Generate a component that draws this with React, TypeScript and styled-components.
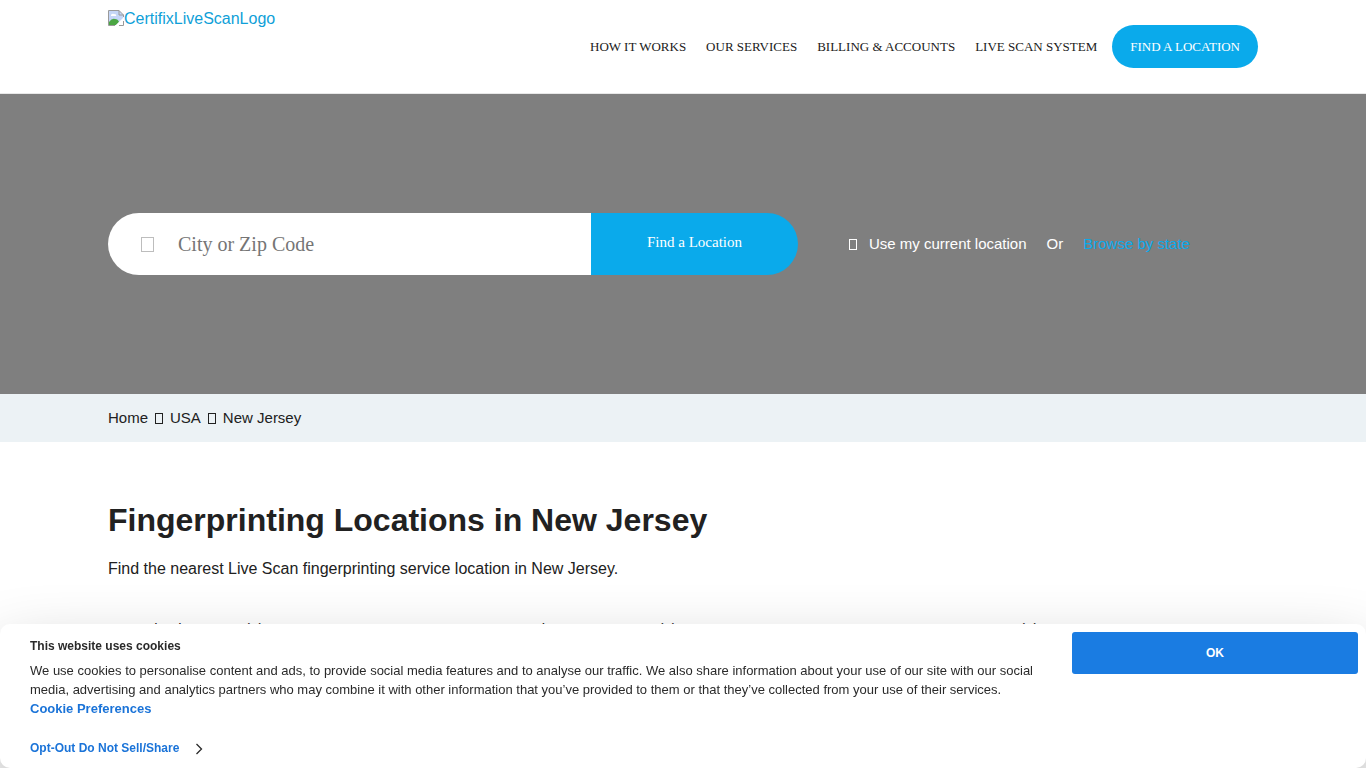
import React from "react";
import styled, { createGlobalStyle } from "styled-components";

const sans = `"Liberation Sans", Arial, sans-serif`;
const serif = `"Liberation Serif", "Times New Roman", serif`;

const GlobalStyle = createGlobalStyle`
  *, *::before, *::after { box-sizing: border-box; }
  html, body { margin: 0; height: 100%; overflow: hidden; }
  body { background: #fff; color: #212121; font: 16px/24px ${sans}; }
  a { color: inherit; text-decoration: none; }
  button, input { font: inherit; margin: 0; border: 0; padding: 0; }
  button { cursor: pointer; }
`;

const Container = styled.div`
  width: 100%;
  max-width: 1182px;
  margin: 0 auto;
  padding: 0 16px;
`;

const Header = styled.header`
  border-bottom: 1px solid #e8e8e8;
`;

const HeaderRow = styled(Container)`
  display: flex;
  justify-content: space-between;
  align-items: flex-start;
  min-height: 93px;
`;

const LogoLink = styled.a`
  display: flex;
  padding-top: 7px;
  color: #0f9fd8;

  svg { margin-top: 3px; flex: none; }
`;

const Nav = styled.nav`
  display: flex;
  align-items: center;
  gap: 20px;
  padding-top: 25px;
  font: 13px/20px ${serif};
  text-transform: uppercase;
  white-space: nowrap;
`;

const PillLink = styled.a`
  margin-left: -5px;
  padding: 12px 18px 11px;
  border-radius: 22px;
  background: #0aaaeb;
  color: #fff;
`;

const Hero = styled.section`
  background: #7f7f7f;
  color: #fff;
  padding: 119px 0;
`;

const HeroRow = styled(Container)`
  display: flex;
  align-items: center;
  gap: 51px;
`;

const SearchForm = styled.form`
  display: flex;
  flex: 0 1 690px;
  height: 62px;
`;

const SearchField = styled.label`
  display: flex;
  flex: 1;
  align-items: center;
  gap: 24px;
  padding-left: 33px;
  border-radius: 31px 0 0 31px;
  background: #fff;
  color: #bdbdbd;
`;

const SearchInput = styled.input`
  flex: 1;
  min-width: 0;
  background: transparent;
  color: #555;
  font: 20px/24px ${serif};
  outline: none;

  &::placeholder { color: #757575; opacity: 1; }
`;

const SearchButton = styled.button`
  width: 207px;
  padding-bottom: 4px;
  border-radius: 0 31px 31px 0;
  background: #0aaaeb;
  color: #fff;
  font: 15px/20px ${serif};
`;

const Glyph = styled.span<{ $large?: boolean }>`
  display: inline-block;
  flex: none;
  width: ${(p) => (p.$large ? 13 : 8)}px;
  height: ${(p) => (p.$large ? 15 : 11)}px;
  border: 1px solid currentColor;
`;

const HeroLinks = styled.div`
  display: flex;
  align-items: center;
  gap: 20px;
  font-size: 15px;
  line-height: 20px;
  white-space: nowrap;
`;

const LocateButton = styled.button`
  display: flex;
  align-items: center;
  gap: 12px;
  background: none;
  color: #fff;
`;

const StateLink = styled.a`
  color: #0aaaeb;
`;

const BreadcrumbBar = styled.nav`
  background: #ecf2f5;
`;

const Breadcrumbs = styled(Container)`
  display: flex;
  align-items: center;
  gap: 7px;
  padding-top: 14px;
  padding-bottom: 14px;
  font-size: 15px;
  line-height: 20px;
`;

const Main = styled.main`
  padding-top: 58px;
`;

const Title = styled.h1`
  margin: 0 0 17px;
  font-size: 32px;
  line-height: 40px;
`;

const Lead = styled.p`
  margin: 0;
`;

const Counties = styled.ul`
  display: grid;
  grid-template-columns: repeat(3, 1fr);
  column-gap: 20px;
  margin: 38px 0 0;
  padding: 0;
  list-style: none;
  font-size: 15px;
  line-height: 20px;
`;

const County = styled.li`
  padding-left: 32px;
`;

const CookieBanner = styled.aside`
  position: fixed;
  left: 0;
  right: 0;
  bottom: 0;
  display: flex;
  align-items: flex-start;
  justify-content: space-between;
  gap: 24px;
  padding: 8px 8px 10px 30px;
  border-radius: 10px;
  background: #fff;
  box-shadow: 0 32px 68px rgba(0, 0, 0, 0.3);
  color: #2a2a2a;
  font-size: 12px;
  line-height: 19px;
`;

const CookieText = styled.div`
  flex: 1;
  padding-top: 5px;
`;

const CookieTitle = styled.h2`
  margin: 0 0 5px;
  font-size: 12px;
  line-height: 19px;
`;

const CookieCopy = styled.p`
  margin: 0;
  font-size: 13px;
`;

const CookieLink = styled.a<{ $large?: boolean }>`
  display: flex;
  align-items: center;
  gap: 16px;
  width: fit-content;
  color: #1a73d8;
  font-size: ${(p) => (p.$large ? 13 : 12)}px;
  font-weight: 700;

  & + & { margin-top: 21px; }
`;

const OkButton = styled.button`
  flex: none;
  width: 286px;
  height: 42px;
  border-radius: 3px;
  background: #1a7ce2;
  color: #fff;
  font-weight: 700;
`;

const BrokenImage = () => (
  <svg width="16" height="16" viewBox="0 0 16 16" aria-hidden="true">
    <path d="M.5 .5H11L15.500 5V8L8 15.500H.5Z" fill="#c5d6f7" />
    <path d="M1 14V12Q4 8 7 9Q10 9 11 12L8 15H1Z" fill="#4ba643" />
    <path d="M3 6a2 2 0 0 1 3-2q3 0 2 2Z" fill="#fff" />
    <path d="M.5 15.500V.5H11L15.500 5V7M.5 15.500H7M11 .5V5H15.500M15.500 11V15.500H11" fill="none" stroke="#9a9a9a" />
    <path d="M7 16L16 7V10L10 16Z" fill="#fff" />
  </svg>
);

const navItems = ["How it works", "Our services", "Billing & accounts", "Live scan system"];
const counties = ["Atlantic County (8)", "Gloucester County (4)", "Ocean County (9)"];

export default function App() {
  return (
    <>
      <GlobalStyle />
      <Header>
        <HeaderRow>
          <LogoLink href="#"><BrokenImage />CertifixLiveScanLogo</LogoLink>
          <Nav aria-label="Main">
            {navItems.map((item) => <a href="#" key={item}>{item}</a>)}
            <PillLink href="#">Find a location</PillLink>
          </Nav>
        </HeaderRow>
      </Header>
      <Hero>
        <HeroRow>
          <SearchForm onSubmit={(e) => e.preventDefault()}>
            <SearchField>
              <Glyph $large aria-hidden="true" />
              <SearchInput type="text" placeholder="City or Zip Code" aria-label="City or Zip Code" />
            </SearchField>
            <SearchButton type="submit">Find a Location</SearchButton>
          </SearchForm>
          <HeroLinks>
            <LocateButton type="button"><Glyph aria-hidden="true" />Use my current location</LocateButton>
            <span>Or</span>
            <StateLink href="#">Browse by state</StateLink>
          </HeroLinks>
        </HeroRow>
      </Hero>
      <BreadcrumbBar aria-label="Breadcrumb">
        <Breadcrumbs>
          <a href="#">Home</a>
          <Glyph aria-hidden="true" />
          <a href="#">USA</a>
          <Glyph aria-hidden="true" />
          <span>New Jersey</span>
        </Breadcrumbs>
      </BreadcrumbBar>
      <Main>
        <Container>
          <Title>Fingerprinting Locations in New Jersey</Title>
          <Lead>Find the nearest Live Scan fingerprinting service location in New Jersey.</Lead>
          <Counties>
            {counties.map((name) => <County key={name}><a href="#">{name}</a></County>)}
          </Counties>
        </Container>
      </Main>
      <CookieBanner aria-label="Cookie consent">
        <CookieText>
          <CookieTitle>This website uses cookies</CookieTitle>
          <CookieCopy>
            We use cookies to personalise content and ads, to provide social media features and to analyse our
            traffic. We also share information about your use of our site with our social media, advertising and
            analytics partners who may combine it with other information that you’ve provided to them or that
            they’ve collected from your use of their services.
          </CookieCopy>
          <CookieLink href="#" $large>Cookie Preferences</CookieLink>
          <CookieLink href="#">
            Opt-Out Do Not Sell/Share
            <svg width="8" height="12" viewBox="0 0 8 12" aria-hidden="true">
              <path d="M1.500 1L6.500 6L1.500 11" fill="none" stroke="#2a2a2a" strokeWidth="1.300" />
            </svg>
          </CookieLink>
        </CookieText>
        <OkButton type="button">OK</OkButton>
      </CookieBanner>
    </>
  );
}
